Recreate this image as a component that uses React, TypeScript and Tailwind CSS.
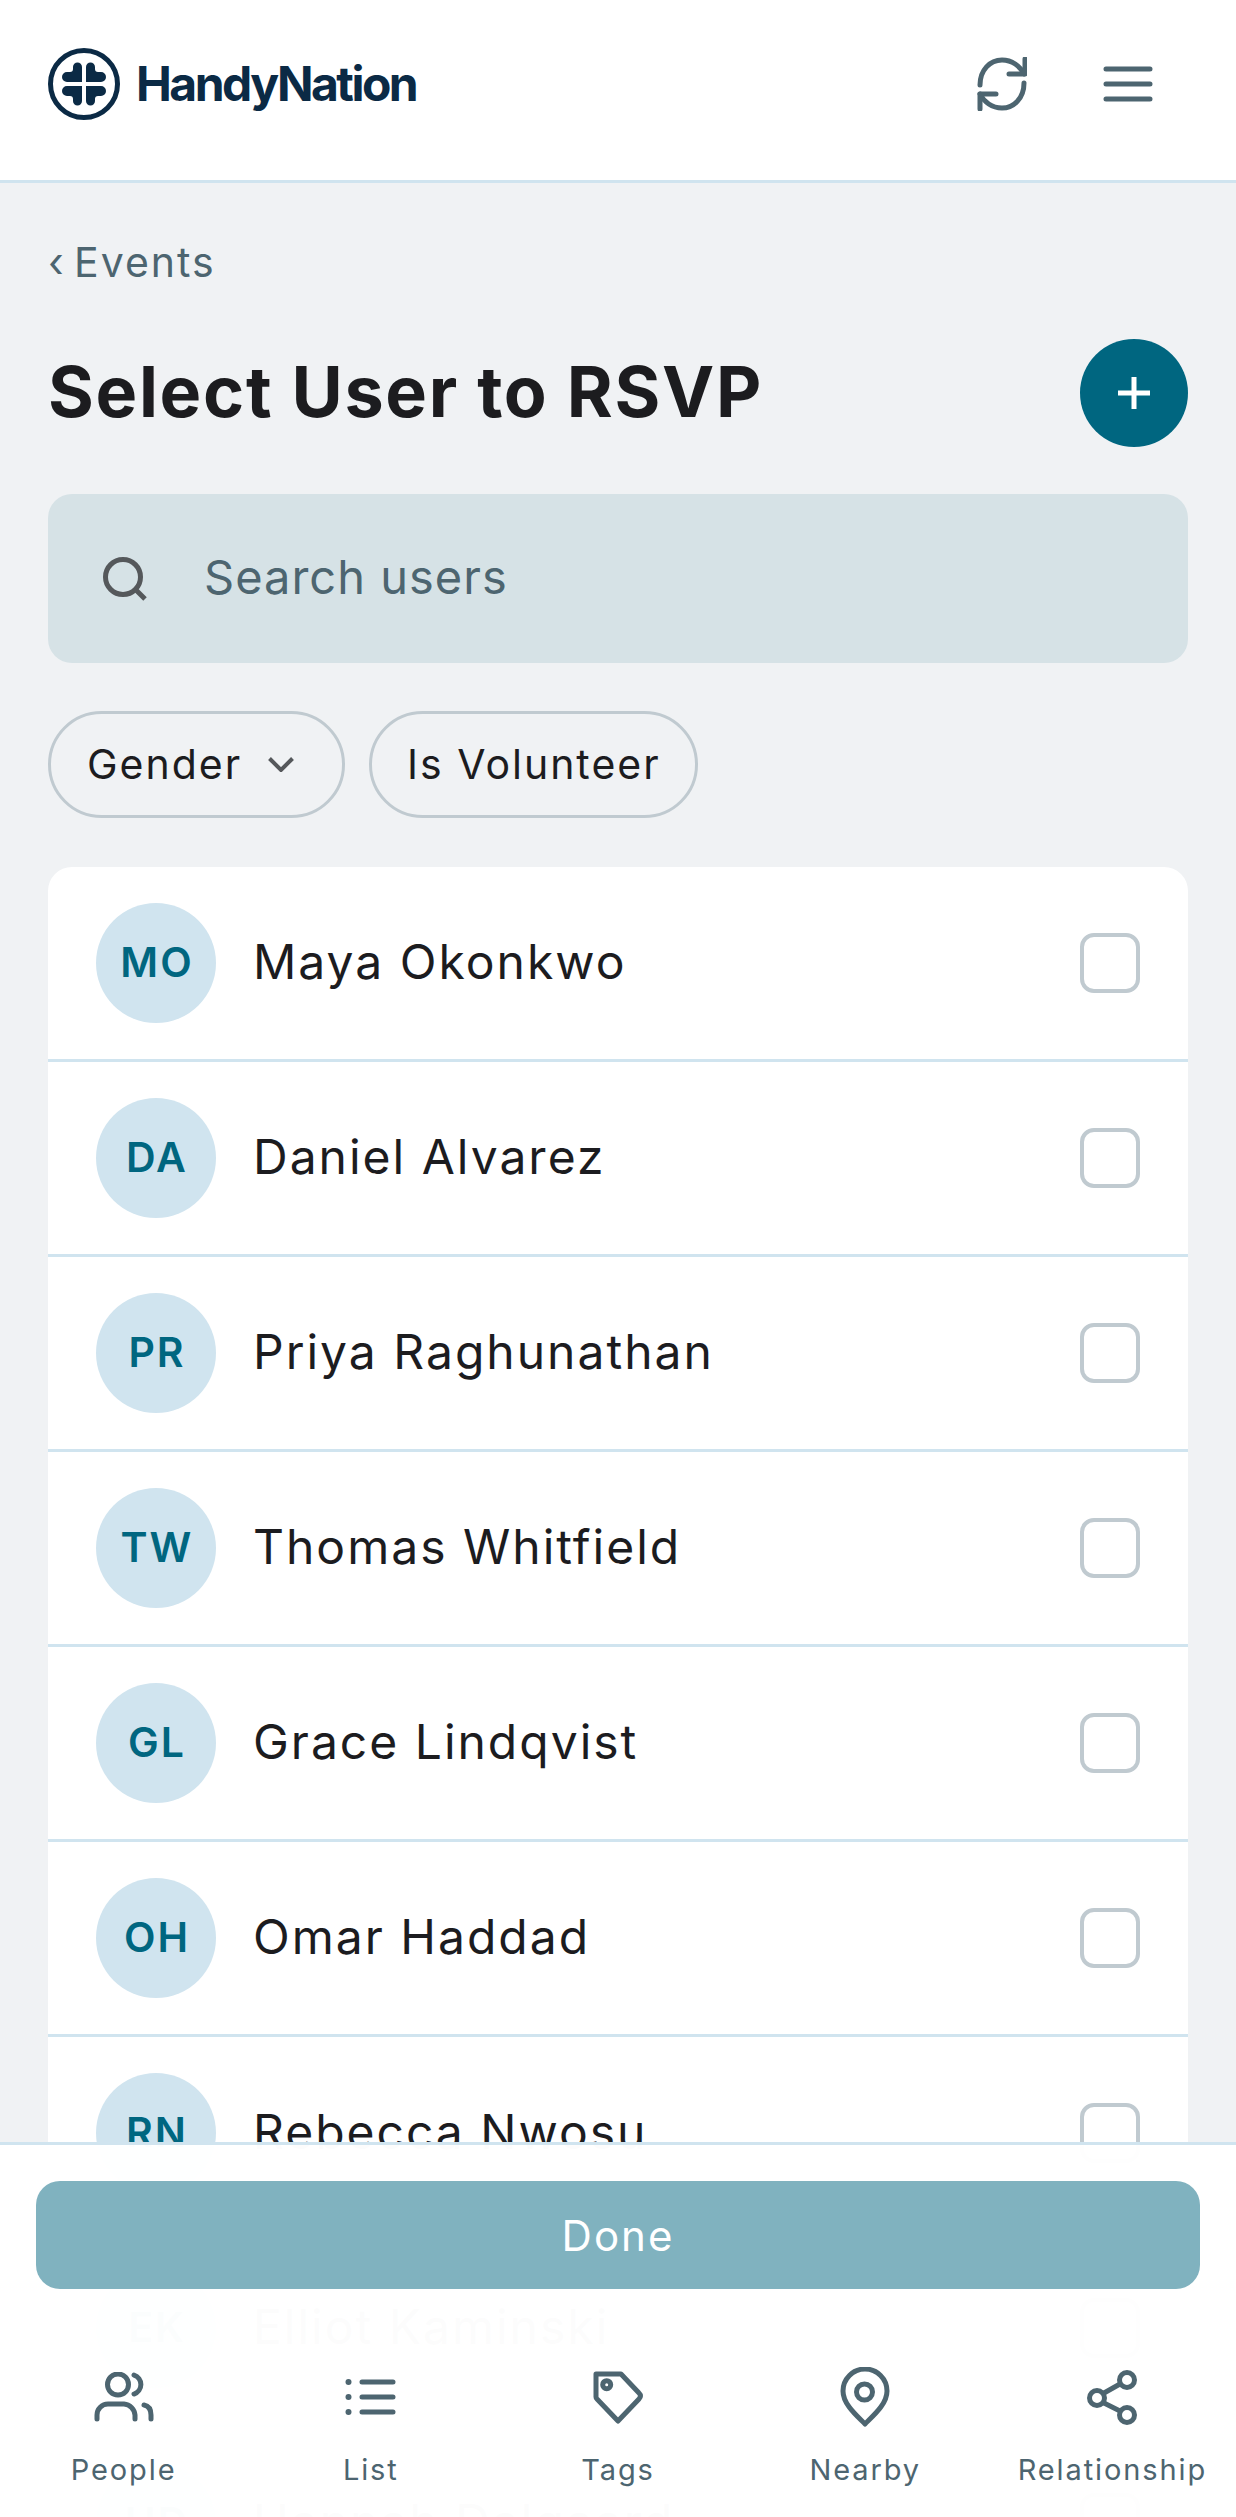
const font = "font-['Inter','Liberation_Sans',sans-serif]";

const users = [
  { initials: "MO", name: "Maya Okonkwo" },
  { initials: "DA", name: "Daniel Alvarez" },
  { initials: "PR", name: "Priya Raghunathan" },
  { initials: "TW", name: "Thomas Whitfield" },
  { initials: "GL", name: "Grace Lindqvist" },
  { initials: "OH", name: "Omar Haddad" },
  { initials: "RN", name: "Rebecca Nwosu" },
  { initials: "EK", name: "Elliot Kaminski" },
  { initials: "HD", name: "Hannah Dalgaard" },
];

function Logo() {
  const petal =
    "M34 34H19a5 5 0 0 1 0-10h3q3 0 3-3v-2a4.5 4.5 0 0 1 9 0z";
  return (
    <svg width="72" height="72" viewBox="0 0 72 72" fill="#0b2a45">
      <circle cx="36" cy="36" r="33.5" fill="none" stroke="#0b2a45" strokeWidth="5" />
      <path d={petal} />
      <path d={petal} transform="translate(72 0) scale(-1 1)" />
      <path d={petal} transform="translate(0 72) scale(1 -1)" />
      <path d={petal} transform="translate(72 72) scale(-1 -1)" />
    </svg>
  );
}

function PeopleIcon() {
  return (
    <svg width="60" height="50" viewBox="0 0 60 50" fill="none" stroke="currentColor" strokeWidth="5" strokeLinecap="round">
      <circle cx="24" cy="12.5" r="10.5" />
      <path d="M40 3A10 10 0 0 1 40 22" />
      <path d="M3 47V43A11 11 0 0 1 14 32H30A12 12 0 0 1 41 43V47" />
      <path d="M50 33C55 34 57 38 57 43V47" />
    </svg>
  );
}

function ListIcon() {
  return (
    <svg width="52" height="36" viewBox="0 0 52 36" fill="none" stroke="currentColor" strokeWidth="5" strokeLinecap="round">
      <path d="M17 3H48M17 18H48M17 33H48" />
      <g fill="currentColor" stroke="none">
        <circle cx="3.5" cy="3" r="3" />
        <circle cx="3.5" cy="18" r="3" />
        <circle cx="3.5" cy="33" r="3" />
      </g>
    </svg>
  );
}

function TagIcon() {
  return (
    <svg width="50" height="53" viewBox="0 0 50 53" fill="none" stroke="currentColor" strokeWidth="5" strokeLinejoin="round">
      <path d="M3 3H28L46 22Q49 25 46 28L25 50L4 28Q3 27 3 26Z" />
      <circle cx="13.7" cy="13.7" r="4" />
    </svg>
  );
}

function PinIcon() {
  return (
    <svg width="50" height="60" viewBox="0 0 50 60" fill="none" stroke="currentColor" strokeWidth="5" strokeLinejoin="round">
      <path d="M25 57C16 48 3 37 3 24A22 22 0 0 1 47 24C47 37 34 48 25 57Z" />
      <circle cx="24.5" cy="25" r="8" />
    </svg>
  );
}

function ShareIcon() {
  return (
    <svg width="50" height="55" viewBox="0 0 50 55" fill="none" stroke="currentColor" strokeWidth="5">
      <circle cx="10" cy="28" r="7.5" />
      <circle cx="40" cy="10" r="7.5" />
      <circle cx="40" cy="45" r="7.5" />
      <path d="M17 23L33 14M17 33L33 41" />
    </svg>
  );
}

const tabs = [
  { label: "People", icon: <PeopleIcon /> },
  { label: "List", icon: <ListIcon /> },
  { label: "Tags", icon: <TagIcon /> },
  { label: "Nearby", icon: <PinIcon /> },
  { label: "Relationship", icon: <ShareIcon /> },
];

function UserRow({ initials, name }: { initials: string; name: string }) {
  return (
    <li className="flex h-[195px] items-center border-b-[3px] border-[#d0e4ef] px-[48px]">
      <div className="flex h-[120px] w-[120px] items-center justify-center rounded-full bg-[#d0e4ef] pl-[2px] text-[41px] font-semibold tracking-[2px] text-[#006680]">
        {initials}
      </div>
      <span className="ml-[37px] flex-1 pb-[3px] text-[48px] tracking-[2px] text-[#1c1c1f]">{name}</span>
      <span className="h-[60px] w-[60px] rounded-[14px] border-[4px] border-[#c0cad0] bg-white" />
    </li>
  );
}

export default function App() {
  return (
    <div className={`relative h-[2517px] overflow-hidden bg-[#f0f2f4] ${font}`}>
      <header className="flex h-[183px] items-center justify-between border-b-[3px] border-[#d0e4ef] bg-white pb-[12px] pl-[48px] pr-[83px]">
        <div className="flex items-center gap-[16px]">
          <Logo />
          <span className="text-[48px] font-bold tracking-[-2.5px] text-[#0b2a45]">HandyNation</span>
        </div>
        <div className="flex items-center gap-[76px] text-[#4d6570]">
          <svg width="50" height="54" viewBox="0 0 50 54" fill="none" stroke="currentColor" strokeWidth="5" strokeLinecap="round" strokeLinejoin="round">
            <path d="M3 28C3 13 13 3 25 3C35 3 43 9 47 17" />
            <path d="M48 2V17H32" />
            <path d="M47 26C47 41 37 51 25 51C15 51 7 45 3 37" />
            <path d="M3 52V37H19" />
          </svg>
          <svg width="50" height="36" viewBox="0 0 50 36" fill="none" stroke="currentColor" strokeWidth="5" strokeLinecap="round">
            <path d="M3 3H47M3 18H47M3 33H47" />
          </svg>
        </div>
      </header>

      <main className="px-[48px]">
        <p className="mt-[54px] flex text-[41px] leading-[50px] tracking-[2px] text-[#4d6570]">
          <span className="w-[26px]">‹</span>
          <span>Events</span>
        </p>
        <div className="mt-[52px] flex h-[108px] items-center justify-between">
          <h1 className="pb-[3px] text-[70px] font-bold tracking-[1.7px] text-[#1c1c1f]">Select User to RSVP</h1>
          <button className="flex h-[108px] w-[108px] items-center justify-center rounded-full bg-[#006680]">
            <svg width="32" height="32" viewBox="0 0 32 32" fill="none" stroke="#fff" strokeWidth="5">
              <path d="M16 0V32M0 16H32" />
            </svg>
          </button>
        </div>
        <div className="mt-[47px] flex h-[169px] items-center rounded-[24px] bg-[#d6e2e6] pl-[55px]">
          <svg width="44" height="44" viewBox="0 0 44 44" fill="none" stroke="#55585b" strokeWidth="5">
            <circle cx="20" cy="20" r="17.5" />
            <path d="M32 32L42 42" />
          </svg>
          <span className="ml-[57px] pb-[2px] text-[47px] tracking-[1px] text-[#4d6570]">Search users</span>
        </div>
        <div className="mt-[48px] flex gap-[24px]">
          <div className="flex h-[107px] w-[297px] items-center rounded-full border-[3px] border-[#c0cad0] pl-[36px] text-[41px] tracking-[2px] text-[#1c1c1f]">
            Gender
            <svg className="ml-[26px]" width="26" height="15" viewBox="0 0 26 15" fill="none" stroke="#55585b" strokeWidth="4">
              <path d="M1.5 1.5L13 13L24.5 1.5" />
            </svg>
          </div>
          <div className="flex h-[107px] w-[329px] items-center rounded-full border-[3px] border-[#c0cad0] pl-[35px] text-[41px] tracking-[2px] text-[#1c1c1f]">
            Is Volunteer
          </div>
        </div>
        <ul className="mt-[49px] overflow-hidden rounded-t-[24px] bg-white">
          {users.map((user) => (
            <UserRow key={user.initials} {...user} />
          ))}
        </ul>
      </main>

      <footer className="absolute inset-x-0 bottom-0 h-[375px] border-t-[3px] border-[#d0e4ef] bg-white/[0.985]">
        <div className="px-[36px] pt-[36px]">
          <button className="h-[108px] w-full rounded-[24px] bg-[#80b2bf] text-[42px] tracking-[2px] text-white">Done</button>
        </div>
        <nav className="mt-[78px] grid grid-cols-5">
          {tabs.map(({ label, icon }) => (
            <div key={label} className="flex flex-col items-center text-[#4d6570]">
              <div className="flex h-[60px] items-center justify-center">{icon}</div>
              <span className="mt-[23px] text-[29px] leading-[40px] tracking-[1.9px]">{label}</span>
            </div>
          ))}
        </nav>
      </footer>
    </div>
  );
}
